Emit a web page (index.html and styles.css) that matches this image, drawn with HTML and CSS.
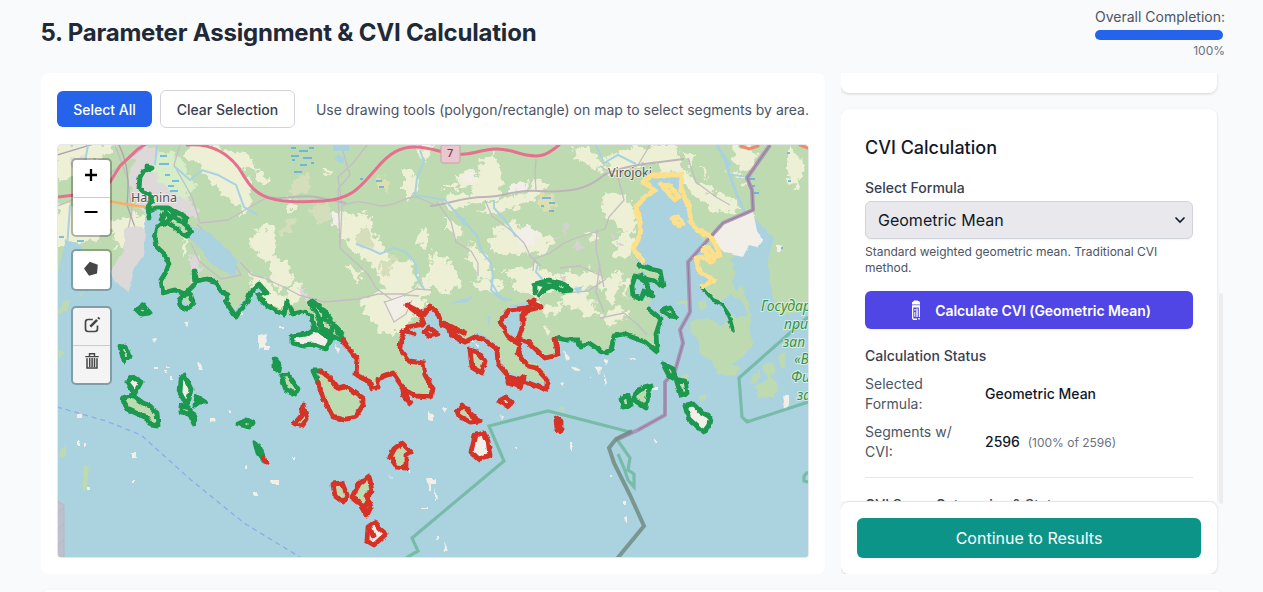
FILE: index.html
```html
<!DOCTYPE html>
<html lang="en">
<head>
<meta charset="utf-8">
<title>Parameter Assignment &amp; CVI Calculation</title>
<link rel="stylesheet" href="styles.css">
</head>
<body>
<header class="page-header">
  <h1>5. Parameter Assignment &amp; CVI Calculation</h1>
  <div class="completion">
    <span class="completion-label">Overall Completion:</span>
    <div class="progress"></div>
    <span class="completion-value">100%</span>
  </div>
</header>
<main class="columns">
  <section class="map-card">
    <div class="toolbar">
      <button class="btn primary">Select All</button>
      <button class="btn outline">Clear Selection</button>
      <span class="hint">Use drawing tools (polygon/rectangle) on map to select segments by area.</span>
    </div>
    <div class="map">
      <svg class="map-canvas" viewBox="58 145 750 412" width="750" height="412">
        <defs>
          <filter id="rough" x="-5%" y="-5%" width="110%" height="110%"><feTurbulence type="fractalNoise" baseFrequency=".13" numOctaves="3" seed="4"/><feDisplacementMap in="SourceGraphic" scale="15" xChannelSelector="R" yChannelSelector="G"/></filter>
          <filter id="coast" x="-5%" y="-5%" width="110%" height="110%"><feTurbulence type="fractalNoise" baseFrequency=".16" numOctaves="2" seed="8"/><feDisplacementMap in="SourceGraphic" scale="4" xChannelSelector="R" yChannelSelector="G"/></filter>
        </defs>
        <rect x="58" y="145" width="750" height="412" fill="#bedab1"/>

        <!-- farmland and clearings -->
        <g filter="url(#rough)" fill="#eef0d5">
          <path d="M57 144h60l-10 12-20 8-12 14-18 4zM57 205l30-6 20 8 8 20-24 14-34 6zM110 222l34-8 4 26-30 8zM190 144h26l14 12 22 30-12 20-20-12-16-24-18-14zM206 146l40 6 14 20-30-8z"/>
          <path d="M237 186l12 6 2 16-10 8zM258 172l10 6-3 6-8-3zM254 232l14-8 8 20-6 18-10-8-10-4zM270 255l18 6 6 20-14 10-8-12zM248 270l20 12 14 16 18-18 6 14-16 12h-22l-14-18zM283 198l14 6-4 8zM322 168l8 4-2 6z"/>
          <path d="M340 212l30 4 6 24 12 10 2 14 20-4 6 18-14 20-16-4-12-28-24-18-12-20zM404 170l10 4 4 12-10 18-4-12zM420 228l8 4-3 18-8-8zM432 250l20 14 10 20-20 10-14-14zM360 300l26-12 16 10 14-4 12 10-14 12-10 18-22-2-18-18zM388 276l22 8 10 14-26-4zM346 265l16 6-4 14zM417 145h20l-14 16z"/>
          <path d="M481 162l14-8 8 22-4 24-30 4-16 6-12-10 32-8zM500 200l30-8 6-12 16 4-20 18-24 8-30 2zM495 230l20-8 16 10 24 6-10 16-24-2-18 6-14-12zM480 168l12-8 4 14zM456 174l16-6 6 14-18 6zM447 218l16 8-4 12-12-8zM442 188l12-6 4 6zM470 242l16 14 8 20-14 4-12-22z"/>
          <path d="M602 194l26 2 10 22-8 20-14-16-12-8zM578 145l18 10 10 16-18-4-14-10zM604 158l30-12 26 4-6 12-26 8-18 6zM570 276l24-6 12 10-22 12zM600 282l12-4 8 18-12 8zM506 270l28-6 20 12 12-8 18 16-8 12-22-8-20 12-18-10zM560 295l22-6 12 12-10 10-18-6zM620 232l10 4 4 14-10 10-12-6zM586 232l12 6-6 6zM540 276l12 8-4 6zM426 275l8 6-2 12-16 4zM408 293l10-6 4 8zM580 160l18 2 6 8-18-2z"/>
          <path d="M650 145h26l4 20 12 14 18 10-2 14-14-6-16-22-20-6zM700 198l16-6 18 8 8 8-16 6-14-4zM735 145l18 4 4 14-14 10-10-14zM787 146l12 10 4 20-8 14-8-18zM728 170l20 6-2 10zM700 165l8 10-4 4zM680 150l14 6-2 10zM612 270l10 10-6 16-6-10zM644 280l4 14-10 4z"/>
          <path d="M470 284l22-6 12 8-10 8zM534 302l18 6 12-6-4 12-14 2zM542 324l10 6-6 4zM576 310l18-6 8 8-18 6zM600 316l18-10 10 8-20 14zM620 275l8 10-2 18zM196 290l8 6-4 4zM184 235l4 12-4 10-4-8z"/>
        </g>
        <g filter="url(#rough)">
          <path fill="#d5debb" d="M304 172l8 4-4 16-16 6-4-10zM310 208l18-6 2 16-12 8zM362 226l8 4 4 16-16 2-2-10zM380 262l14-6-2 14-10 8zM280 226l14-6-2 10-8 6z"/>
          <path fill="#dddfb0" d="M377 174l8 4 2 12-8-2zM540 193l14 4-2 14-12-2z"/>
          <path fill="#ddd9d9" d="M137 150l10-6 20 14-2 12 12 18 14 14 8 14-14 4-20-8-18 4-14-14-6-22zM70 160l14-4 4 10-10 10zM190 255l10 2 2 16-10 10zM300 290l9 4 1 8-10-4z"/>
          <path fill="#f2eee8" d="M511 184l14-4 2 10-18 4zM456 178l18-4 2 8zM516 232l16-6 8 8-12 14-10-6zM385 304l16-8 12 6-20 20zM330 212l10 4-2 12-6-2z"/>
          <path fill="#d6d2d0" d="M562 222l8 4-6 8zM576 238l8 8-10 4zM552 238l8-2-2 6zM608 232l8 6-4 6zM618 240l8 2-6 6zM558 273l10 4-6 6z"/>
          <path fill="#d6edc8" d="M160 150l16 4 12 16 8 18-14 12-16-14-14-16z"/>
        </g>

        <!-- minor roads -->
        <g fill="none" stroke="#c4bdc4" stroke-width="1.3" stroke-linejoin="round">
          <path d="M57 206c25-7 30-20 50-30l36-28M115 145l13 35 4 32-6 26M180 145l-6 20 18 32 8 26 28-3 22-13 16-9M197 224l16 17 20 19 8 15-20 4-22-18-8-18M240 262l12 13 12 3 20 9 15 8 25 7 34-3 20-5 28 0 10-5 16 1M341 145l9 30-12 14 2 60M367 145l-14 18-15 14 4 28M342 206l-2 42 28 26 8 14 16 12M342 206c20-8 25-2 38 0 22-1 20-9 37-9l18 8M536 159l-1 14 1 18M600 166l18 12 6 22-15 17-4 12-29 9-12 5-14 10-16 6-1 12M597 229l-1 20 8 38M437 202l14 20 5 20 15 9 7 12v13M485 200l7 16 21 16 11 11 7 14 10 9M650 145l-12 20-18 9M688 158l8 24 20 15 14 8M600 318l24-5 14 12 9 10M600 264l-4 28 8 20M560 268l20-2 17 8"/>
          <path stroke="#bdb4ba" stroke-width="2" d="M262 195c18 8 36-2 54 2l30 6M430 206c20-2 32-9 54-9 22 0 30-8 54-6 32 2 50-2 66-16M604 175c12-6 32-10 48-12l32-4"/>
          <path d="M385 302l20-7 14 1M384 301l10 21 12-8 6-14M550 285l14 8 24-2 18-12"/>
          <path stroke="#aaa4aa" d="M57 155l40-12M119 145c10 20 10 40 8 60l10 28"/>
        </g>
        <!-- streams -->
        <g fill="none" stroke="#a9d2e0" stroke-width="2">
          <path d="M157 145l-2 20M174 166l16 14 12-10 16 5 18 10 8 22 14 8M88 145l-5 28M70 205l-4 58M356 244l14 5 10 5 14-6 12 4 10 12v12l8 13M420 150l4 12-7 16-2 17 12 2 18 3 12 14 8 8 12 14 5 16 9 11 2 14-2 13 9 8 12 2M494 200v8l12 13 10 16M538 264l-2 8 7 8M596 145l8 18 14-8 18 9M732 175l20 2M490 280l8 14 8 8"/>
          <path stroke-width="3" d="M717 145l8 14 4 14 8 22 8 18"/>
          <path stroke-width="6" d="M333 148h16M336 157l8 4"/><path stroke-width="4" d="M722 154l8 12"/>
        </g>
        <path stroke="#58a9e8" stroke-width="1.3" fill="none" d="M291 148h5M299 151h9M309 148h5M291 156h8M303 158h9M300 165h7M294 172h8M311 163h3M292 160h3M360 179h3M376 181h6M379 187h5M542 198h9M549 203h6M541 206h3M549 211h5M160 156h7M159 164h10M165 175h5M172 181h7M168 186h6M170 191h8M747 179h8M754 193h5M752 186h3M787 153h3M788 181h3M59 237h5M77 241h7M778 248h5"/>

        <!-- sea -->
        <path filter="url(#coast)" fill="#aad3df" d="M40 284L58 272 66 240 80 244 86 262 112 268 128 248 141 238 145 225 146 212 157 208 166 222 158 227 155 238 157 247 165 255 170 265 167 273 162 282V297L175 292 181 296 188 305 193 295 192 287 193 278 213 277 217 285 225 290 223 297 233 312 247 297 258 284 265 292 257 296 265 305 283 315 292 313 305 310 312 315 316 328 326 332 343 340 350 350 357 358 356 375 370 382 372 388H377V379L393 373 403 388 417 397 430 397 433 388 425 375 423 363 408 362 399 348 400 340 407 327 423 323 421 315 407 305 423 313 430 303 438 313 445 323 457 332 465 340 477 332 488 338 497 345 498 358 508 372 523 377 547 385 547 375 537 363 528 362 518 348 520 340 528 342 545 358 558 355 555 339 577 340 580 346 588 343 603 353 610 350 613 337 624 334 645 342 656 352 655 333 660 317 648 307 652 296 640 300 633 297 635 277 643 272 660 287 663 280 658 270 638 264 633 248 642 230 637 207 645 198 655 190 650 180 660 176 683 175 681 193 690 210 692 227 703 240 715 248 718 260 706 260 696 257 698 270 713 279 703 286 713 300 722 303 729 315 733 330 742 338 750 340 750 310 742 285 740 255 745 228 755 218 773 237 768 262 770 287 778 314 786 315 808 308 830 308V570H40z"/>
        <path filter="url(#coast)" fill="#ddd9d9" d="M124 228l14-2 8 4-2 26-10 12-5 24-14-10-5-10 14-22z"/>
        <path filter="url(#coast)" fill="#aad3df" d="M190 226l14 4 12 8 12 12 10 12-4 14-12-5-14-10-8-14-12-9zM500 317l10-12 20-3-5 9-2 14-5 15-10-8-7-7zM540 282l14-2 8 8-14 2zM573 288l12-2-6 8zM487 316h4l-1 12zM452 303l10-4 12-2-8 6zM454 214l12 4-2 8z"/>
        <path filter="url(#coast)" fill="#aad3df" d="M730 258l12-4 2 28-8 10-4-12 4-8zM722 300l10-6 12 10 4 12-12 2-8-8z"/>
        <path filter="url(#coast)" fill="#f2eee8" d="M711 240l12-17 30-12 4 20 6 10-6 6-8-2-6 12-18-4zM776 244l6 2-2 6-4-2z"/>
        <path filter="url(#coast)" fill="#bedab1" d="M661 184l9 3 8 10-4 3-8-7zM690 322l18-4 12 8 8-6 14-1 8 14 3 10-8 12-14 10 2 10-16-1-4-12-14-9 0-13-8-6zM697 303l8-4 2 8-6 4zM675 302l14-2-2 6zM755 386l8-4 7-6 8 8-4 14-16-1zM762 366l10-4 4 10-8 6zM778 356l6-4 2 14-5 2zM753 375l8-6-4 14-8 2zM682 376l6-2v8zM730 365l12 2-6 8-12 1zM700 396l4-2 2 6-6 1zM62 447l5-1-1 11-6 1zM83 466l6 0-2 24-5 1zM560 407l5-1-1 6-5-1zM57 315l10-5 4-10-8 2zM57 350l8 2-6 6zM80 294l4-4-1 8zM328 410l6-3-2 6z"/>

        <!-- rocky islets -->
        <g filter="url(#coast)" fill="#f2eee8">
          <path d="M184 322h6l-3 4zM152 340l6-2-4 5zM197 362l4 2 2 6-4 0zM210 418h6l-1 5-5-2zM259 335l8-2-2 12-6 5zM279 326h5v2h-5zM263 345h6v5h-6zM335 345l5 4-2 6zM474 342l5 2-1 4zM428 412l5 3v6l-5-1zM442 408l5 0-2 5zM564 350l6 8-4 3zM572 366l8 4-5 2zM595 365l6 2-1 8zM603 359l6 1-3 5zM604 373l3 10-3 3zM561 382l4 1-2 4zM500 413l3 4-2 2zM628 358h8v2zM165 370h2v3h-2zM170 377h3v3h-3zM167 366h3v2h-3zM154 367h4v2h-4zM78 414h4v4h-4zM270 480h9v4h-8zM253 492h4v4h-4zM132 453h4v4h-4zM426 479h10v5h-5v6h-2zM388 474l4 5-1 1zM408 470h2v3h-2zM435 487l2 12-2 1zM653 387h4v3h-4zM663 400h3v2h-3zM783 395h6v10l-4 5zM623 502h3v3h-3zM624 516h3v6h-2zM468 340h6v3h-6z"/>
          <path d="M78 440h2v6h-2zM84 443h2v4h-2zM292 457h3v3h-3zM570 443h2v8h-2zM655 440h2v3h-2zM133 480h2v3h-2zM87 487h3v3h-3zM245 465h2v3h-2zM229 410h2v3h-2zM421 508h7v1h-7zM437 536h2v3h-2zM444 540l4 12h-3zM514 447h2v2h-2zM610 475h2v2h-2zM240 313h3v2h-3zM590 375h1v2h-1z"/>
        </g>

        <!-- boundaries -->
        <path fill="none" stroke="#58ac86" stroke-width="3.2" opacity=".6" d="M406 558l12-7-6-13 92-77-15-35 59-15 82 21M808 317l-69 61 3 39 5 5 61-20M616 438l14 20-2 12 6 4v13l-6-7-4-12-6-14M808 472l-4 4v5l4 1M745 420l5 2"/>
        <path fill="none" stroke="#a98bb2" stroke-width="4" opacity=".85" stroke-linejoin="round" d="M770 145l-23 33 5 12 1 20-30 13-35 39 2 50-10 18 3 13-8 28-10 11v33l-27 15-22 10"/>
        <path fill="none" stroke="#8d7e9b" stroke-width="1" d="M770 145l-23 33 5 12 1 20-30 13-35 39 2 50-10 18 3 13-8 28-10 11v33l-27 15"/>
        <path fill="none" stroke="#728b84" stroke-width="4" opacity=".85" d="M632 431l-16 8-7 9 5 15 16 32 14 31-28 34"/>
        <path fill="none" stroke="#8eabe8" stroke-width="1.3" stroke-dasharray="5 4" d="M57 407l49 14 35 14 50 45 53 43 59 36"/>
        <path fill="#c5b9c3" stroke="#c9a5ac" opacity=".65" d="M57 501l7 4v52h-7zM57 514l7-6M57 530l7-6M57 546l7-6"/>

        <!-- trunk road -->
        <g fill="none" stroke-linecap="round">
          <path stroke="#f9ae63" stroke-width="2.3" d="M108 201l22 4 25 3"/>
          <path stroke="#e5718e" stroke-width="3" d="M57 197l18-2 22-6 13-7 10-16 18-17 8-5M187 145c24-2 40 8 51 22 10 15 13 23 26 29 14 7 38 6 59 5 30-2 38-15 53-32 14-17 25-22 39-22 19 0 31 9 50 7 18-2 27-9 50-2 25 8 32 3 44-7"/>
          <path stroke="#f1896d" stroke-width="3" d="M741 146l8 3 9-3M800 145l8 3"/>
        </g>
        <rect x="441" y="145" width="19" height="18" rx="2" fill="#e8c8ce" stroke="#d29ca9"/>
        <text x="447" y="157" class="road-no">7</text>
        <text x="131" y="202" class="place">Hamina</text>
        <text x="608" y="177" class="place">Virojoki</text>
        <g class="reserve"><text x="761" y="311">Государ</text><text x="784" y="329">при</text><text x="783" y="347">зап</text><text x="794" y="364">«В</text><text x="791" y="382">Фи</text><text x="797" y="400">за</text></g>

        <!-- segments, low CVI -->
        <g class="seg low" filter="url(#coast)">
          <path d="M147 167l5 1-9 4-3 5-1 11 6 5 5 1 2 7-4 7 1 10M149 210l7-2 12 0 10 5 8 4-1 8 6 6-4 5-6-3-8-7-10-4-6 5-3 11 2 8 8 8 5 10-3 8-5 8 2 13 11-3 11 4-6 6 1 6 7 3 6-6-2-8-4-3 8-8-1-13 3 10 10-2 9 3 4 9 8 4-2 7 10 15 4-7 7-8 3-9 9-9 8 9-10 2 9 10 18 10 3-14 6 13 12-3 7 6 3 12M165 212l-4 8 4 4 6-6zM172 211l4 8 9 4"/>
          <path d="M310 303l8 12 4 14 10 6-1-13 10 10M312 301l9 7 8 9 8 12 7 12-9-4-5 2-6-7-5-8 6-8M321 329l8 4 5-10-8-2"/>
          <path fill="#f2eee8" d="M292 336l14-2 8-5 8 4 9 7-5 9-13-4-9 1-12-3z"/>
          <path d="M313 371h8M313 371l5 11"/>
          <path d="M557 338l10 2 11 0 3 7 8-4 15 10 7-3 3-14 10-2 21 8 12 10-1-18 5-15-12-10M639 265l11 4 10 2 3 15-8-5-20-5-3 10 1 10 8 3 3-8 9 5-6-10-6-10 8 4M535 293v-9l14-4 12 3 10 7-9 1-8-6-10 4-5 7M540 284l15 3"/>
          <path d="M702 287l11 13 8 3 8 12 4 15" stroke-width="3.6"/>
          <path fill="#bedab1" d="M137 310l7-5 5 8-8 1zM120 347l6-1 4 10-6 5zM123 399l9-4 11 8 7 3 7 7 1 13-7-1-4-7-20-9zM181 406l8 2 6 10-1 6-5-10-8-2zM195 405l2-8 8 5-6 0zM238 424l9-4 6 3-4 4zM275 359l5 6-1 6-4-2zM281 376l7-2 10 15-3 5-9-4zM662 311l8-3 6 9-6-1zM663 364l10 5 3 10-8-5zM676 379l9 2 2 12-6 2zM651 386l-3 10-2 12-7-5-6-3 5-10 6-2zM621 399l7-4 2 11-7 1z"/>
          <path fill="#f2eee8" d="M127 382l6-5 8 5-6 11zM685 406l8-2 8 8 9 5-1 8-5 7-5-4-10-9zM180 393l1-14 3-4 7 14-2 10-3 5z"/>
          <path d="M255 443l3 10 6 8M259 446l4 10"/>
        </g>
        <!-- segments, high CVI -->
        <g class="seg high" filter="url(#coast)">
          <path d="M343 340l7 10 7 9-1 16 14 7 2 6h6v-9l15-6 10 15 13 8 14 1 3-8-8-14-2-12-14-2-9-13 1-8 6-13 17-3-3-8-14-11 17 9 6-8 8 8 4 11 6 2 3 8 14 7 12-6 12 7 8 6 1 15 11 13 14 4 24 9v-10l-11-12-8-2-10-13 2-8-12-9-8-14 9-12 19-2 6-8M530 302l11 5-12 3-6 4v12l-5 13 10 3 17 16 13-3-3-16M444 323l20 10M450 330l10 8M402 331l12 3M424 332l5-4 9 6-8 2z"/>
          <path fill="#bedab1" d="M321 371l9 7 7 10 8-2 18 12 0 7-7 11-12 4-11-3-10-19-5-16M303 405l4 14-5 7-8-2 7-8zM404 391l6 12-7-8zM470 350l7 2 8 9-3 12-10-6zM457 411l6-6 7 8 9 8-9 1-11-6zM556 418l5 3 0 10-4-1zM508 377l10 6 6-6-4 10-12-4zM402 443l9 9-5 3 0 13-9-1-7-10 5-9zM333 484l9-1 5 12-4 7-8-6zM369 476l3 15-5 6 4 10-5 9-6-13-8-6 7-13z"/>
          <path fill="#f2eee8" d="M499 401l7-4 6 6-5 3zM475 435l9-2 4 8 2 14-11 4-8-7zM375 522l4 6 7 6-12 11-7-4 1-14z"/>
          <path d="M263 458l4 5M369 502l-5 4 4 7M370 528l3 8"/>
        </g>
        <!-- segments, moderate CVI -->
        <path class="seg moderate" filter="url(#coast)" d="M643 261l-10-12 5-9 3-11-5-22 9-10 10-7-12-8 9-7h30l-1 14 8 18 2 16 7 7 12 6 8 12 1 7-7 7-10-5-6 1 4 14 14 9-11 5M660 184l10 2 9 11-5 3-6-8zM673 219l5-2 5 6-5 3zM703 250l4-3 8 7-5 3z"/>
      </svg>
      <div class="controls">
        <div class="control">
          <div class="tool zoom"><svg width="14" height="14" viewBox="0 0 14 14"><path d="M7 1v12M1 7h12" stroke="#000" stroke-width="2.3"/></svg></div>
          <div class="tool zoom minus"><svg width="14" height="14" viewBox="0 0 14 14"><path d="M.5 7h13" stroke="#000" stroke-width="2"/></svg></div>
        </div>
        <div class="control single">
          <div class="tool"><svg width="16" height="16" viewBox="0 0 16 16"><path d="M6.8.8l8 3-.8 8.6-8 2.4L1 7.4z" fill="#464646"/></svg></div>
        </div>
        <div class="control muted">
          <div class="tool"><svg width="18" height="18" viewBox="0 0 18 18" fill="none" stroke="#464646"><path d="M9.8 3.5H5.2Q2.5 3.5 2.5 6.2v6.6q0 2.7 2.7 2.7h6.6q2.7 0 2.7-2.7V9.5" stroke-width="1.7"/><path d="M7.3 10.7l6.8-6.8" stroke-width="2.6"/><path d="M15.2 2.9l1.2-1.2" stroke-width="2.6"/></svg></div>
          <div class="tool"><svg width="18" height="18" viewBox="0 0 18 18" fill="none" stroke="#464646"><path d="M2.3 4.6h13.4M6.5 4.2V1.8h5v2.4" stroke-width="1.4"/><path d="M4 6.2v9.8h10V6.2M6.7 6v9M9.1 6v9M11.5 6v9" stroke-width="1.5"/></svg></div>
        </div>
      </div>
    </div>
  </section>
  <aside class="side">
    <div class="side-scroll">
      <div class="card-tail"></div>
      <section class="cvi-card">
        <h2>CVI Calculation</h2>
        <label class="field-label">Select Formula</label>
        <div class="select"><span>Geometric Mean</span><svg width="12" height="8" viewBox="0 0 12 8"><path d="M1.5 1.5L6 6l4.5-4.5" fill="none" stroke="#111827" stroke-width="1.6"/></svg></div>
        <p class="help">Standard weighted geometric mean. Traditional CVI method.</p>
        <button class="calculate"><svg width="8" height="20" viewBox="0 0 8 20"><path fill="#fff" d="M1 2l1-1.4h3.5L8 2v2.4H0V2zM0 5.2h8V17H6.8V7.6H1.3V18.4H5V20H1.2L0 18.5zM2.3 9h1.3v1.4H2.3zM2.3 12h1v4.8h-1zM4.3 8.6h1.4V17H4.3zM6.2 18h1.6v1.6H6.2z"/></svg>Calculate CVI (Geometric Mean)</button>
        <h3>Calculation Status</h3>
        <dl class="status">
          <dt>Selected Formula:</dt><dd>Geometric Mean</dd>
          <dt>Segments w/ CVI:</dt><dd>2596 <small>(100% of 2596)</small></dd>
        </dl>
        <h3 class="stats-title">CVI Score Categories &amp; Stats</h3>
      </section>
    </div>
    <div class="scroll-thumb"></div>
    <footer class="side-footer"><button class="continue">Continue to Results</button></footer>
  </aside>
</main>
<div class="next-card"></div>
</body>
</html>
```
FILE: styles.css
```css
* { box-sizing: border-box; margin: 0; padding: 0; }
body { width: 1263px; height: 592px; overflow: hidden; background: #f9fafb; font-family: Inter, "Liberation Sans", sans-serif; color: #111827; }
button { font-family: inherit; border: 0; }
.page-header { height: 73px; padding: 7px 38px 0 40.5px; display: flex; justify-content: space-between; }
h1 { font-size: 24px; line-height: 32px; font-weight: 700; letter-spacing: -.2px; color: #1f2937; margin-top: 10px; }
.completion { width: 130px; display: flex; flex-direction: column; align-items: stretch; }
.completion-label { font-size: 14px; line-height: 20px; color: #4b5563; white-space: nowrap; }
.progress { width: 128px; height: 10px; margin-top: 3px; border-radius: 5px; background: #2563eb; }
.completion-value { font-size: 12px; line-height: 16px; margin-top: 3px; text-align: right; color: #6b7280; }
.columns { height: 501px; padding-left: 41px; display: flex; gap: 16px; }
.map-card { width: 784px; padding: 16px; background: #fff; border-radius: 8px; }
.toolbar { display: flex; align-items: center; height: 40px; margin-bottom: 15px; }
.btn { padding-top: 2px; font-size: 14px; font-weight: 500; line-height: 20px; border-radius: 6px; white-space: nowrap; }
.primary { width: 95px; height: 36px; color: #fff; background: #2563eb; }
.outline { width: 135px; height: 38px; margin-left: 8px; color: #374151; background: #fff; border: 1px solid #d1d5db; }
.hint { margin-left: 21px; font-size: 14px; color: #4b5563; white-space: nowrap; }
.map { position: relative; width: 752px; height: 414px; border: 1px solid #e5e7eb; border-radius: 4px; overflow: hidden; }
.map-canvas { display: block; }
.place { font: 12.5px "Noto Sans", sans-serif; fill: #555; stroke: #fff; stroke-width: 2px; stroke-opacity: .5; paint-order: stroke; }
.road-no { font: 500 11px "Noto Sans", sans-serif; fill: #7e3150; }
.reserve { font: italic 400 14px "Noto Sans", sans-serif; fill: #389538; stroke: #fff; stroke-width: 2px; stroke-opacity: .5; paint-order: stroke; }
.seg { fill: none; stroke-width: 4.8; stroke-linecap: round; stroke-linejoin: round; }
.low { stroke: #1a9850; }
.high { stroke: #d73027; }
.moderate { stroke: #fee08b; }
.controls { position: absolute; left: 13px; top: 13px; display: flex; flex-direction: column; gap: 12px; }
.control { width: 41px; border: 2px solid rgba(0,0,0,.25); border-radius: 5px; background: #fff; background-clip: padding-box; }
.tool { height: 37px; display: flex; align-items: center; justify-content: center; }
.tool + .tool { height: 38px; border-top: 1px solid #ccc; }
.zoom { padding-right: 1px; padding-bottom: 7px; }
.minus { padding-bottom: 9px; }
.single .tool { height: 38px; padding-right: 1px; padding-bottom: 3px; }
.muted { background-color: #f4f4f4; margin-top: 3px; }
.muted .tool { padding-bottom: 3px; }
.muted .tool + .tool { padding-bottom: 8px; }
.side { position: relative; width: 382px; display: flex; flex-direction: column; overflow: hidden; }
.side-scroll { height: 428px; overflow: hidden; width: 380px; }
.card-tail { width: 376px; height: 20px; margin-bottom: 16px; background: #fff; border-radius: 0 0 8px 8px; box-shadow: 0 1px 3px rgba(0,0,0,.16); }
.cvi-card { width: 376px; height: 560px; padding: 25px 24px 24px; background: #fff; border-radius: 8px; box-shadow: 0 1px 3px rgba(0,0,0,.14); }
h2 { font-size: 18px; line-height: 28px; font-weight: 500; }
.field-label { display: block; margin-top: 16px; font-size: 14px; font-weight: 500; line-height: 20px; color: #374151; }
.select { height: 38px; margin-top: 3px; padding: 0 6px 0 12px; display: flex; align-items: center; justify-content: space-between; font-size: 16px; background: #e9e9ed; border: 1px solid #d1d5db; border-radius: 6px; box-shadow: 0 1px 2px rgba(0,0,0,.05); }
.help { margin-top: 5px; font-size: 12px; line-height: 16px; color: #4b5563; }
.calculate { width: 328px; height: 38px; margin-top: 15px; padding-left: 5px; display: flex; align-items: center; justify-content: center; gap: 15px; border-radius: 6px; background: #4f46e5; color: #fff; font-size: 14px; font-weight: 600; letter-spacing: -.06px; box-shadow: 0 1px 2px rgba(0,0,0,.05); }
h3 { margin-top: 17px; font-size: 14px; line-height: 20px; font-weight: 500; color: #374151; }
.status { margin-top: 8px; padding-bottom: 15px; display: grid; grid-template-columns: 104px 1fr; gap: 8px 16px; align-items: center; font-size: 14px; line-height: 20px; border-bottom: 1px solid #e5e7eb; }
dt { color: #4b5563; }
dd { font-weight: 500; }
small { margin-left: 4px; font-size: 12px; font-weight: 400; color: #6b7280; }
.scroll-thumb { position: absolute; left: 378px; top: 220px; width: 4px; height: 211px; border-radius: 2px; background: #ededee; }
.side-footer { width: 376px; height: 73px; padding: 16px; background: #fff; border-top: 1px solid #e5e7eb; border-radius: 8px; box-shadow: 0 1px 3px rgba(0,0,0,.14); }
.continue { width: 344px; height: 40px; border-radius: 6px; background: #0d9488; color: #fff; font-size: 16px; }
.next-card { width: 1182px; height: 20px; margin: 16px 0 0 41px; background: #fff; border-radius: 8px; box-shadow: 0 1px 3px rgba(0,0,0,.1); }
```
